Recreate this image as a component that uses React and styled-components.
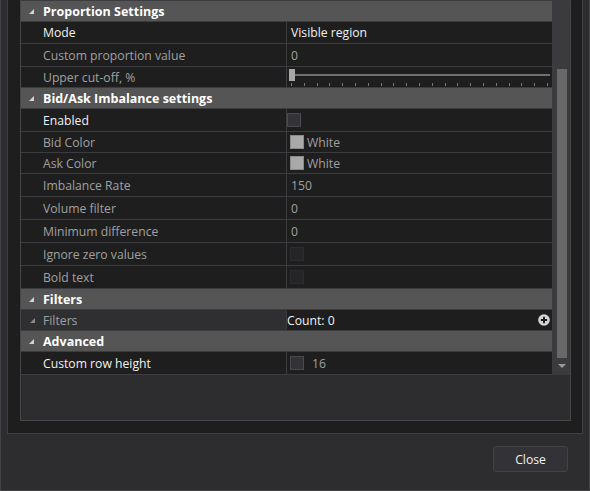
import React from 'react';
import styled, { createGlobalStyle } from 'styled-components';

const GlobalStyle = createGlobalStyle`
  html, body {
    margin: 0;
    padding: 0;
    background: #2d2d30;
  }
  body {
    font-family: "Open Sans", "Liberation Sans", sans-serif;
    font-size: 12.2px;
    color: #f1f1f1;
  }
  * {
    box-sizing: border-box;
  }
`;

const Window = styled.div`
  width: 590px;
  height: 491px;
  background: #2d2d30;
  border: 1px solid #434346;
  border-top: none;
  padding: 0 6px;
  display: flex;
  flex-direction: column;
`;

const DarkPanel = styled.div`
  height: 434px;
  background: #1e1e1e;
  border: 1px solid #3f3f46;
  border-top: none;
  padding: 0 11px 12px 12px;
  display: flex;
`;

const PropertyBox = styled.div`
  flex: 1;
  background: #2d2d30;
  border: 1px solid #46464a;
  border-top: none;
  display: flex;
  flex-direction: column;
`;

const GridArea = styled.div`
  display: flex;
  border-top: 1px solid #3c3c40;
  border-bottom: 1px solid #3c3c40;
`;

const Grid = styled.div`
  width: 532px;
  border-right: 1px solid #3c3c40;
  display: flex;
  flex-direction: column;
`;

const Category = styled.div`
  height: ${p => p.$h}px;
  background: #555555;
  border-bottom: ${p => (p.$last ? 'none' : '1px solid #3c3c40')};
  display: flex;
  align-items: center;
  padding-left: 8px;
  font-weight: 700;
  font-size: 12.5px;
  color: #ffffff;
`;

const Arrow = styled.span`
  width: 0;
  height: 0;
  border-style: solid;
  border-width: 0 0 5px 5px;
  border-color: transparent transparent ${p => p.$color || '#d4d4d4'} transparent;
  margin-right: ${p => p.$gap || 9}px;
  margin-top: 1px;
`;

const Row = styled.div`
  height: ${p => p.$h}px;
  display: grid;
  grid-template-columns: 266px 1fr;
  border-bottom: ${p => (p.$last ? 'none' : '1px solid #3c3c40')};
  background: #1e1e1e;
`;

const NameCell = styled.div`
  display: flex;
  align-items: center;
  padding-left: ${p => (p.$expander ? 9 : 22)}px;
  border-right: 1px solid #3c3c40;
  background: ${p => (p.$expander ? '#2f2f32' : '#1e1e1e')};
  color: ${p => (p.$dim ? '#a0a0a0' : '#f1f1f1')};
  white-space: nowrap;
`;

const ValueCell = styled.div`
  display: flex;
  align-items: center;
  padding-left: ${p => p.$pad ?? 4}px;
  padding-right: 2px;
  color: ${p => (p.$dim ? '#a0a0a0' : '#f1f1f1')};
  white-space: nowrap;
  gap: 4px;
`;

const CheckBox = styled.span`
  width: 14px;
  height: 14px;
  border: 1px solid ${p => (p.$disabled ? '#2c2c2f' : '#4a4a4e')};
  background: ${p => (p.$disabled ? '#252527' : '#333337')};
  flex: none;
`;

const Swatch = styled.span`
  width: 14px;
  height: 14px;
  background: #a9a9a9;
  border: 1px solid #8a8a8a;
  flex: none;
`;

const Spacer = styled.span`
  flex: 1;
`;

const PlusIcon = () => (
  <svg width="12" height="12" viewBox="0 0 12 12">
    <circle cx="6" cy="6" r="5.8" fill="#d6d6d6" />
    <path d="M6 2.8v6.4M2.8 6h6.4" stroke="#1e1e1e" strokeWidth="2" />
  </svg>
);

const SliderBox = styled.div`
  flex: 1;
  height: 100%;
  display: flex;
  flex-direction: column;
  padding-top: 2px;
`;

const TrackLine = styled.div`
  position: relative;
  height: 13px;
  &::before {
    content: '';
    position: absolute;
    left: 1px;
    right: 0;
    top: 5px;
    height: 2px;
    background: #707070;
  }
`;

const Thumb = styled.div`
  position: absolute;
  left: 1px;
  top: 0;
  width: 6px;
  height: 12px;
  background: #a8a8a8;
`;

const Ticks = styled.div`
  display: flex;
  justify-content: space-between;
  padding: 1px 2px 0 3px;
`;

const Tick = styled.span`
  width: 1px;
  height: 3px;
  background: #767676;
`;

const ScrollBar = styled.div`
  flex: 1;
  background: #3b3b3e;
  display: flex;
  flex-direction: column;
  align-items: center;
  padding-top: 68px;
`;

const ScrollThumb = styled.div`
  width: 10px;
  height: 289px;
  background: #686868;
  margin-left: 1px;
`;

const ScrollArrow = styled.div`
  flex: 1;
  display: flex;
  align-items: center;
  justify-content: center;
  &::after {
    content: '';
    border-style: solid;
    border-width: 4px 4px 0 4px;
    border-color: #9a9a9a transparent transparent transparent;
    margin-left: 1px;
  }
`;

const Footer = styled.div`
  flex: 1;
  display: flex;
  justify-content: flex-end;
  align-items: flex-start;
  padding: 12px 15px 0 0;
`;

const Button = styled.button`
  width: 75px;
  height: 26px;
  background: #333337;
  border: 1px solid #434346;
  border-radius: 3px;
  color: #f1f1f1;
  font-family: inherit;
  font-size: 12.2px;
`;

const rows = [
  { type: 'cat', label: 'Proportion Settings', h: 21 },
  { label: 'Mode', value: 'Visible region', h: 22 },
  { label: 'Custom proportion value', value: '0', dim: true, h: 23 },
  { label: 'Upper cut-off, %', kind: 'slider', dim: true, h: 21 },
  { type: 'cat', label: 'Bid/Ask Imbalance settings', h: 21 },
  { label: 'Enabled', kind: 'check', pad: 0, h: 23 },
  { label: 'Bid Color', kind: 'color', value: 'White', dim: true, h: 21 },
  { label: 'Ask Color', kind: 'color', value: 'White', dim: true, h: 21 },
  { label: 'Imbalance Rate', value: '150', dim: true, h: 23 },
  { label: 'Volume filter', value: '0', dim: true, h: 23 },
  { label: 'Minimum difference', value: '0', dim: true, h: 23 },
  { label: 'Ignore zero values', kind: 'check', disabled: true, dim: true, h: 23 },
  { label: 'Bold text', kind: 'check', disabled: true, dim: true, h: 23 },
  { type: 'cat', label: 'Filters', h: 21 },
  { label: 'Filters', kind: 'collection', value: 'Count: 0', dim: true, h: 21 },
  { type: 'cat', label: 'Advanced', h: 21 },
  { label: 'Custom row height', kind: 'checkvalue', value: '16', h: 22, last: true },
];

function renderValue(r) {
  switch (r.kind) {
    case 'slider':
      return (
        <ValueCell $pad={1}>
          <SliderBox>
            <TrackLine>
              <Thumb />
            </TrackLine>
            <Ticks>
              {Array.from({ length: 21 }).map((_, i) => <Tick key={i} />)}
            </Ticks>
          </SliderBox>
        </ValueCell>
      );
    case 'check':
      return (
        <ValueCell $pad={r.pad ?? 3}>
          <CheckBox $disabled={r.disabled} />
        </ValueCell>
      );
    case 'color':
      return (
        <ValueCell $pad={3} $dim>
          <Swatch />
          <span style={{ marginLeft: -1 }}>{r.value}</span>
        </ValueCell>
      );
    case 'collection':
      return (
        <ValueCell $pad={0}>
          {r.value}
          <Spacer />
          <PlusIcon />
        </ValueCell>
      );
    case 'checkvalue':
      return (
        <ValueCell $pad={3} $dim>
          <CheckBox />
          <span style={{ marginLeft: 4 }}>{r.value}</span>
        </ValueCell>
      );
    default:
      return <ValueCell $dim={r.dim}>{r.value}</ValueCell>;
  }
}

export default function App() {
  return (
    <>
      <GlobalStyle />
      <Window>
        <DarkPanel>
          <PropertyBox>
            <GridArea>
              <Grid>
                {rows.map((r, i) =>
                  r.type === 'cat' ? (
                    <Category key={i} $h={r.h}>
                      <Arrow />
                      {r.label}
                    </Category>
                  ) : (
                    <Row key={i} $h={r.h} $last={r.last}>
                      <NameCell $dim={r.dim} $expander={r.kind === 'collection'}>
                        {r.kind === 'collection' && <Arrow $color="#8a8a8a" $gap={8} />}
                        {r.label}
                      </NameCell>
                      {renderValue(r)}
                    </Row>
                  )
                )}
              </Grid>
              <ScrollBar>
                <ScrollThumb />
                <ScrollArrow />
              </ScrollBar>
            </GridArea>
          </PropertyBox>
        </DarkPanel>
        <Footer>
          <Button>Close</Button>
        </Footer>
      </Window>
    </>
  );
}
